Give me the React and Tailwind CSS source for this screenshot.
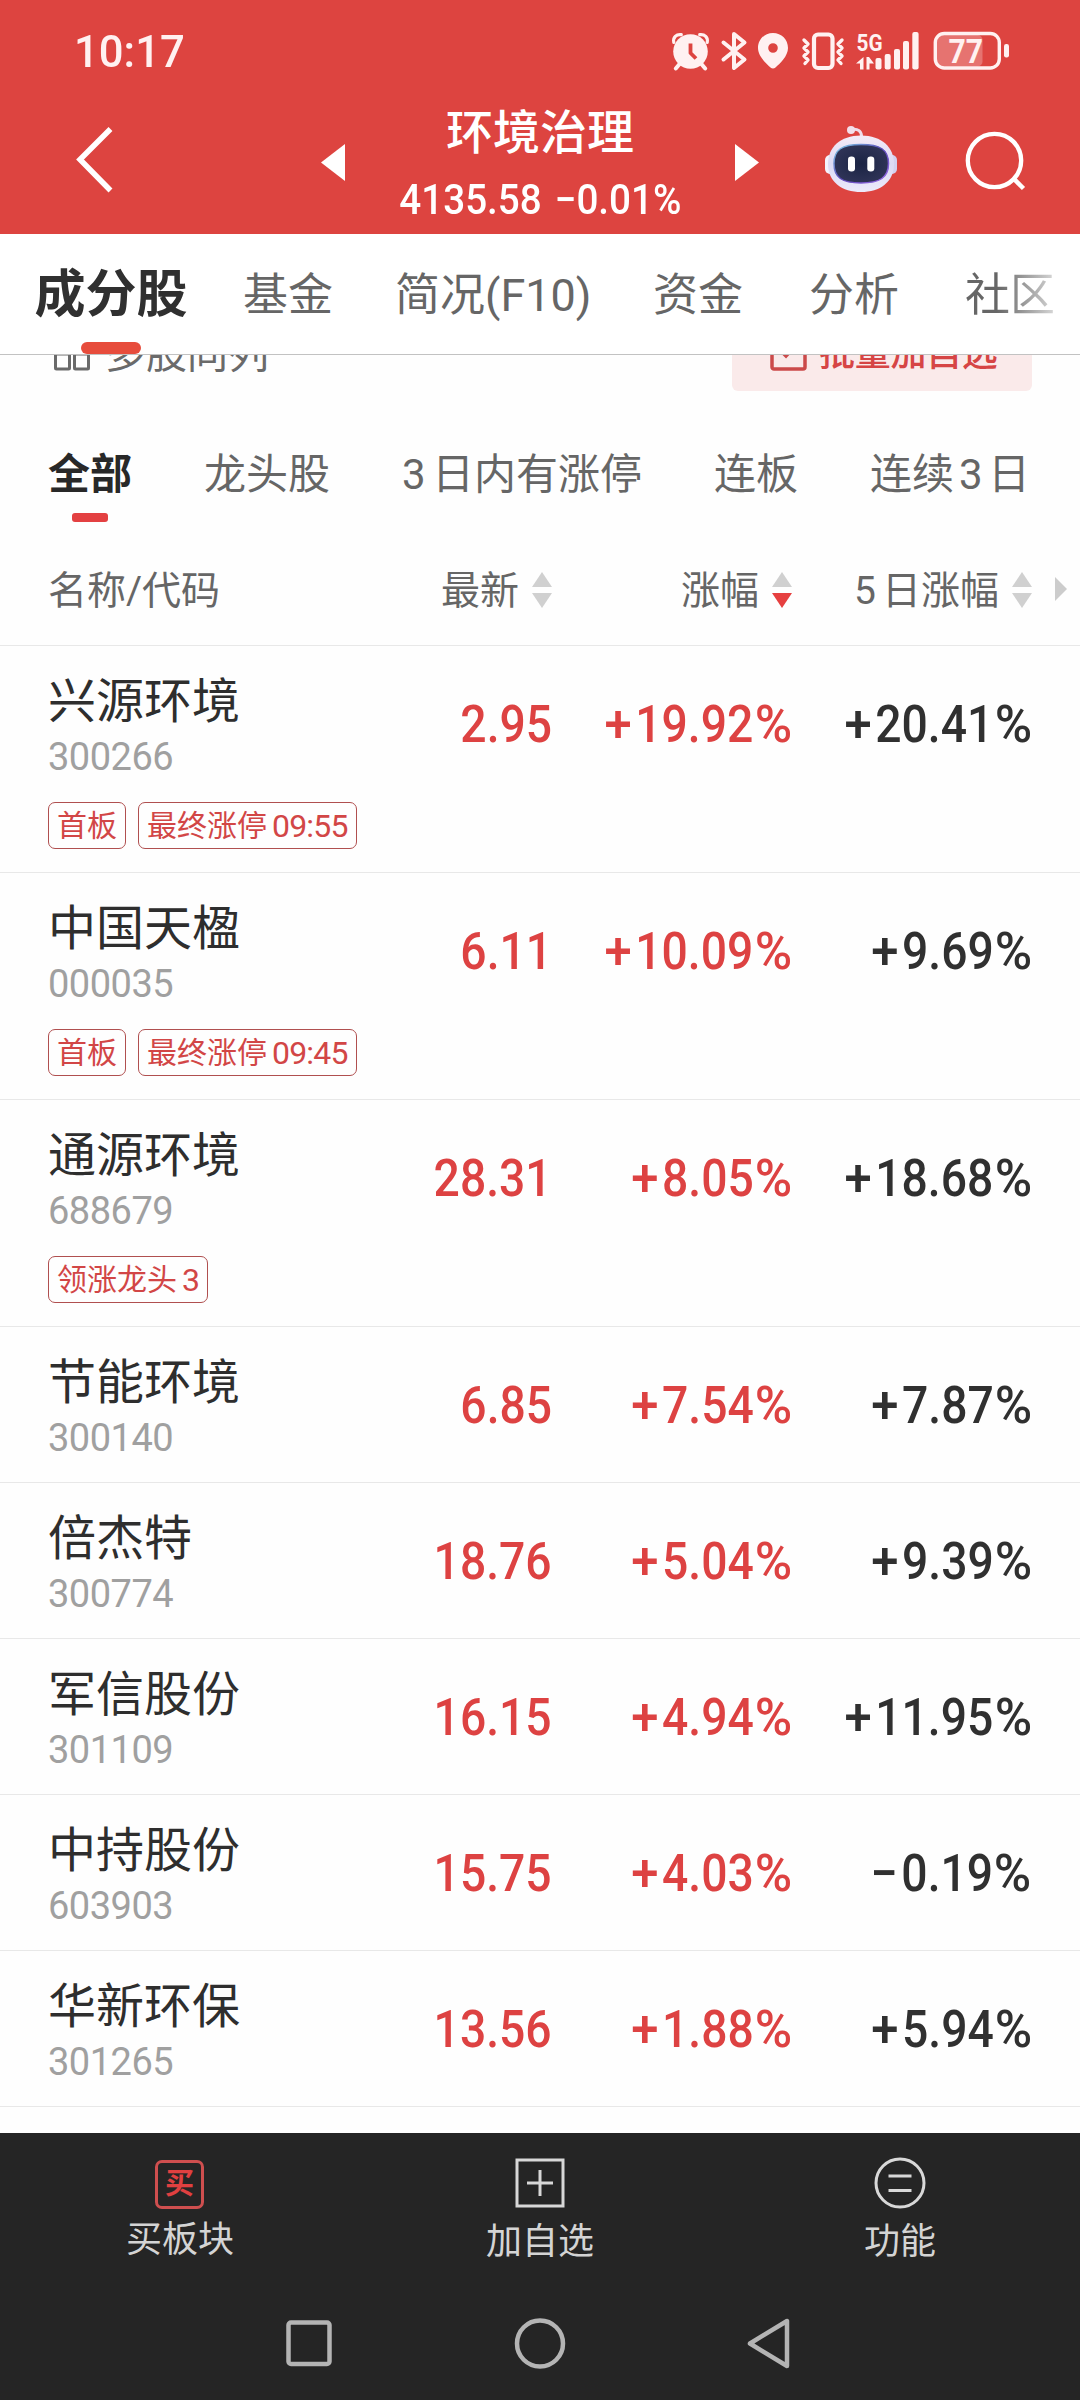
const FONT = "font-['Roboto','Noto_Sans_CJK_SC',sans-serif]";

const ROWS = [
  { name: '兴源环境', code: '300266', last: '2.95', pct: '+19.92%', five: '+20.41%', tags: [['首板', ''], ['最终涨停', '09:55']] },
  { name: '中国天楹', code: '000035', last: '6.11', pct: '+10.09%', five: '+9.69%', tags: [['首板', ''], ['最终涨停', '09:45']] },
  { name: '通源环境', code: '688679', last: '28.31', pct: '+8.05%', five: '+18.68%', tags: [['领涨龙头', '3']] },
  { name: '节能环境', code: '300140', last: '6.85', pct: '+7.54%', five: '+7.87%' },
  { name: '倍杰特', code: '300774', last: '18.76', pct: '+5.04%', five: '+9.39%' },
  { name: '军信股份', code: '301109', last: '16.15', pct: '+4.94%', five: '+11.95%' },
  { name: '中持股份', code: '603903', last: '15.75', pct: '+4.03%', five: '−0.19%' },
  { name: '华新环保', code: '301265', last: '13.56', pct: '+1.88%', five: '+5.94%' },
];

function StatusIcons() {
  return (
    <svg className="block h-[44px] w-[344px]" viewBox="668 29 344 44" fill="none">
      <circle cx="690.5" cy="51.5" r="17.300" fill="#fff1f1" />
      <path d="M673.8 42.500c-1-5 2.500-8.500 7.500-7.800M707.200 42.500c1-5-2.500-8.500-7.500-7.800" stroke="#fff1f1" strokeWidth="3.200" strokeLinecap="round" />
      <path d="M680 63.500l-4.200 5M701 63.500l4.200 5" stroke="#fff1f1" strokeWidth="4" strokeLinecap="round" />
      <path d="M690.500 43.500v9.500l5.500 5.500" stroke="#dd4440" strokeWidth="3.800" strokeLinejoin="round" />
      <path d="M723.500 42.500l21 17-10.500 8.500V34l10.500 8.500-21 17" stroke="#fff1f1" strokeWidth="4" strokeLinejoin="round" strokeLinecap="round" />
      <path fillRule="evenodd" fill="#fff1f1" d="M773 33c8.500 0 15 6.500 15 15 0 8-8 15.500-12.500 19.500-1.600 1.300-3.400 1.300-5 0C766 63.500 758 56 758 48c0-8.500 6.500-15 15-15zm0 10.200a4.800 4.800 0 1 0 0 9.600 4.800 4.800 0 0 0 0-9.600z" />
      <rect x="814" y="34.500" width="18.500" height="33.500" rx="4" stroke="#fff1f1" strokeWidth="4.200" />
      <path d="M804 40l4 4-4 4 4 4-4 4 4 4-3 3.500M842 40l-4 4 4 4-4 4 4 4-4 4 3 3.500" stroke="#fff1f1" strokeWidth="3.400" strokeLinejoin="round" strokeLinecap="round" />
      <text x="856.500" y="50.500" fontSize="24.500" fontWeight="700" textLength="26" lengthAdjust="spacingAndGlyphs" fontFamily="Roboto, sans-serif" fill="#fff1f1">5G</text>
      <path d="M863.500 57v12.500h-3.500v-6h-4zM866.500 57h2.500l5 6.500h-4.500v6h-3z" fill="#fff1f1" />
      <g fill="#fff1f1">
        <rect x="875.500" y="58" width="6" height="11.500" rx="2" />
        <rect x="884.700" y="54" width="6" height="15.500" rx="2" />
        <rect x="894" y="49" width="6" height="20.500" rx="2" />
        <rect x="903" y="41" width="6" height="28.500" rx="2" />
        <rect x="912.300" y="32" width="6.300" height="37.500" rx="2" />
      </g>
      <rect x="937" y="35" width="45.500" height="31.500" rx="5" fill="#e67370" />
      <rect x="935.300" y="33.500" width="64" height="34.500" rx="9" stroke="#fff1f1" strokeWidth="3.400" />
      <rect x="1004" y="44" width="5" height="13.500" rx="2.200" fill="#fff1f1" />
      <text x="948.500" y="62.500" fontSize="34" fontWeight="700" textLength="34.500" lengthAdjust="spacingAndGlyphs" fontFamily="Roboto, sans-serif" fill="#fff1f1">77</text>
    </svg>
  );
}

function Robot() {
  return (
    <svg className="block h-[68px] w-[74px]" viewBox="824 125 74 68" fill="none">
      <defs>
        <linearGradient id="shell" x1="0" y1="0" x2="0" y2="1">
          <stop offset="0" stopColor="#f4ebf7" />
          <stop offset="0.500" stopColor="#dcdaf4" />
          <stop offset="1" stopColor="#eceafb" />
        </linearGradient>
        <linearGradient id="rim" x1="0" y1="0" x2="1" y2="1">
          <stop offset="0" stopColor="#7fd0e8" />
          <stop offset="0.500" stopColor="#5c48b8" />
          <stop offset="1" stopColor="#9a6be8" />
        </linearGradient>
        <radialGradient id="visor">
          <stop offset="0" stopColor="#1b2444" />
          <stop offset="1" stopColor="#2e3356" />
        </radialGradient>
      </defs>
      <path d="M851 129.500c7-1.500 11 2 10.500 8" stroke="#f0dcea" strokeWidth="3" />
      <circle cx="851" cy="130" r="4" fill="#f3dfea" />
      <rect x="825" y="155" width="12" height="19" rx="5" fill="#f4f2fc" />
      <rect x="885" y="155" width="12" height="19" rx="5" fill="#d3d1f0" />
      <path d="M861 135.500c21 0 33 12 33 28.500 0 18-14 28-33 28s-33-10-33-28c0-16.500 12-28.500 33-28.500z" fill="url(#shell)" />
      <path d="M861 144.500c19 0 27.500 5 27.500 19s-8.500 19.500-27.500 19.500-27-5.500-27-19.500 8-19 27-19z" fill="url(#visor)" stroke="url(#rim)" strokeWidth="1.500" />
      <rect x="848" y="156.500" width="7" height="15" rx="3.200" fill="#fff" />
      <rect x="867.300" y="156.500" width="7" height="15" rx="3.200" fill="#fff" />
    </svg>
  );
}

function Header() {
  return (
    <header className="h-[234px] bg-[#dd4440] text-white">
      <div className="flex h-[102px] items-center justify-between pl-[74px] pr-[68px]">
        <span className="origin-left scale-x-[0.97] text-[45px] font-medium leading-none text-[#fff1f1]">10:17</span>
        <StatusIcons />
      </div>
      <div className="flex h-[132px] items-start">
        <svg className="ml-[72px] mt-[21px] h-[74px] w-[44px]" viewBox="72 123 44 74" fill="none">
          <path d="M110.500 129L80 159.500l30.500 31" stroke="#fff" strokeWidth="5.500" />
        </svg>
        <svg className="ml-[205px] mt-[42px] h-[37px] w-[24px]" viewBox="0 0 24 37"><path d="M24 0v37L0 18.500z" fill="#fff" /></svg>
        <div className="flex w-[390px] flex-col items-center">
          <h1 className="-mt-[2px] text-[47px] font-medium leading-[66px]">环境治理</h1>
          <div className="mt-[9px] flex h-[50px] origin-center scale-x-[0.92] items-center gap-[14px] whitespace-nowrap text-[42px] font-medium leading-none">
            <span>4135.58</span><span>−0.01%</span>
          </div>
        </div>
        <svg className="mt-[42px] h-[37px] w-[24px]" viewBox="0 0 24 37"><path d="M0 0v37l24-18.500z" fill="#fff" /></svg>
        <div className="ml-[65px] mt-[23px]"><Robot /></div>
        <svg className="ml-[66px] mt-[28px] h-[64px] w-[64px]" viewBox="964 130 64 64" fill="none">
          <circle cx="994.500" cy="160.500" r="26.700" stroke="#fff" strokeWidth="4.300" />
          <path d="M1013 178l10.500 10.500" stroke="#fff" strokeWidth="4.500" />
        </svg>
      </div>
    </header>
  );
}

function Tabs() {
  return (
    <nav className="flex h-[121px] items-center border-b border-[#c2c2c2] bg-white pl-[35px] text-[45px] whitespace-nowrap text-[#666]">
      <div className="relative flex h-full w-[152px] items-center justify-center pt-[3px] text-[51px] font-bold text-[#303030]">
        成分股
        <i className="absolute bottom-0 left-[46px] h-[12px] w-[60px] rounded-full bg-[#e74c3c]" />
      </div>
      <span className="ml-[56px] w-[90px] pt-[3px]">基金</span>
      <span className="ml-[62px] w-[196px] pt-[3px]">简况(F10)</span>
      <span className="ml-[62px] w-[90px] pt-[3px]">资金</span>
      <span className="ml-[66px] w-[90px] pt-[3px]">分析</span>
      <span className="ml-[66px] w-[90px] bg-linear-to-r from-[#666] from-35% to-[#d8d8d8] bg-clip-text pt-[3px] text-transparent">社区</span>
    </nav>
  );
}

function Tools() {
  return (
    <div className="h-[38px] overflow-hidden">
      <div className="-mt-[39px] flex h-[75px] items-center justify-between pl-[53px] pr-[48px]">
        <div className="flex items-center text-[41px] leading-none text-[#6a6a6a]">
          <svg className="-mt-[4px] mr-[14px] h-[38px] w-[38px]" viewBox="0 0 38 38" fill="none" stroke="#6a6a6a" strokeWidth="3">
            <rect x="11" y="2" width="16" height="15" rx="1" />
            <rect x="2.500" y="21" width="14" height="15" rx="1" />
            <rect x="21.500" y="21" width="14" height="15" rx="1" />
          </svg>
          <span className="pt-[2px]">多股同列</span>
        </div>
        <div className="flex h-[75px] w-[300px] items-center rounded-[6px] bg-[#faeaea] pl-[38px] text-[36px] font-medium leading-none text-[#d64545]">
          <svg className="-mt-[4px] mr-[12px] h-[38px] w-[37px]" viewBox="0 0 37 38" fill="none" stroke="#cb4a4a" strokeWidth="3.500">
            <rect x="2" y="2" width="33" height="34" rx="2" />
            <path d="M11 18l5 5 12-13" />
          </svg>
          <span className="tracking-[-0.3px]">批量加自选</span>
        </div>
      </div>
    </div>
  );
}

function Filters() {
  return (
    <div className="flex h-[160px] items-center pl-[48px] pt-[2px] text-[42px] whitespace-nowrap text-[#666]">
      <div className="relative w-[84px] font-bold text-[#282828]">
        全部
        <i className="absolute left-[24px] top-[70px] h-[9px] w-[36px] rounded-[3px] bg-[#e34041]" />
      </div>
      <span className="ml-[72px] w-[126px]">龙头股</span>
      <span className="ml-[72px] flex w-[240px]"><span className="w-[30px]">3</span>日内有涨停</span>
      <span className="ml-[72px] w-[84px]">连板</span>
      <span className="ml-[72px] flex">连续<span className="w-[34px] pl-[5px]">3</span>日</span>
    </div>
  );
}

function Sort({ active }) {
  return (
    <svg className="-mt-[2px] ml-[13px] h-[36px] w-[20px]" viewBox="0 0 20 36">
      <path d="M10 0l10 15H0z" fill="#d0d0d0" />
      <path d="M10 36L0 21h20z" fill={active ? '#e64040' : '#d0d0d0'} />
    </svg>
  );
}

function TableHead() {
  return (
    <div className="flex h-[93px] items-start border-b border-[#e8e8e8] pl-[48px] pt-px text-[39px] leading-[74px] whitespace-nowrap text-[#666]">
      <span className="w-[180px]">名称/代码</span>
      <div className="flex w-[324px] items-center justify-end">最新<Sort /></div>
      <div className="flex w-[240px] items-center justify-end">涨幅<Sort active /></div>
      <div className="flex w-[240px] items-center justify-end"><span className="mr-[6px] text-[39px]">5</span>日涨幅<Sort /></div>
      <svg className="ml-[23px] mt-[23px] h-[24px] w-[12px]" viewBox="0 0 12 24"><path d="M0 0l12 12L0 24z" fill="#ccc" /></svg>
    </div>
  );
}

/* Right-aligned figure in condensed digits, with room round its sign and percent mark. */
function Num({ children, className }) {
  const [, sign, digits, unit] = children.match(/^([+−]?)([\d.]+)(%?)$/);
  return (
    <div className={`mt-[45px] flex h-[68px] items-center justify-end whitespace-nowrap text-[52px] font-medium leading-none ${className}`}>
      <span className="flex origin-right scale-x-[0.89]">
        {sign && <span className="mr-[4px] inline-block origin-right scale-x-[1.06]">{sign}</span>}
        <span>{digits}</span>
        {unit && <span className="ml-[5px] inline-block origin-right scale-x-[1.1]">{unit}</span>}
      </span>
    </div>
  );
}

function Row({ row }) {
  return (
    <div className={`flex items-start border-b border-[#e8e8e8] pl-[48px] ${row.tags ? 'h-[227px]' : 'h-[156px]'}`}>
      <div className="w-[324px]">
        <div className="mt-[24px] h-[64px] text-[48px] leading-[64px] text-[#2e2e2e]">{row.name}</div>
        <div className="mt-px h-[44px] text-[38px] leading-[44px] tracking-[-0.5px] text-[#a0a0a0]">{row.code}</div>
        {row.tags && (
          <div className="mt-[23px] flex gap-[12px]">
            {row.tags.map(([label, num]) => (
              <span key={label} className="flex h-[47px] items-center rounded-[7px] border border-[#b04f4f] px-[8px] text-[30px] leading-none whitespace-nowrap text-[#d24646]">
                <span className="pt-px">{label}</span>
                {num && <span className="ml-[5px] text-[32px] tracking-[-0.8px]">{num}</span>}
              </span>
            ))}
          </div>
        )}
      </div>
      <Num className="w-[180px] text-[#dd4242]">{row.last}</Num>
      <Num className="w-[240px] text-[#dd4242]">{row.pct}</Num>
      <Num className="w-[240px] text-[#303030]">{row.five}</Num>
    </div>
  );
}

function BottomBar() {
  const label = 'h-[44px] text-[36px] leading-[44px] text-[#d4d4d4]';
  return (
    <footer className="h-[267px] bg-[#252525]">
      <div className="grid h-[150px] grid-cols-3">
        <div className="flex flex-col items-center pt-[27px]">
          <div className="mr-[1px] flex h-[49px] w-[49px] items-center justify-center rounded-[7px] border-[3px] border-[#cf4f4f] text-[29px] font-bold leading-none text-[#e04040]">买</div>
          <div className={`mt-[9px] ${label}`}>买板块</div>
        </div>
        <div className="flex flex-col items-center pt-[25px]">
          <svg className="mr-[1px] h-[50px] w-[50px]" viewBox="0 0 50 50" fill="none" stroke="#d8d8d8" strokeWidth="3">
            <rect x="2" y="2" width="46" height="46" />
            <path d="M12 25h26M25 12v26" />
          </svg>
          <div className={`mt-[12px] ${label}`}>加自选</div>
        </div>
        <div className="flex flex-col items-center pt-[24px]">
          <svg className="h-[52px] w-[52px]" viewBox="0 0 52 52" fill="none" stroke="#d8d8d8" strokeWidth="3">
            <circle cx="26" cy="26" r="24" />
            <path d="M14.500 19h23M14.500 33.500h23" />
          </svg>
          <div className={`mt-[11px] ${label}`}>功能</div>
        </div>
      </div>
      <div className="flex items-center justify-between pl-[284px] pr-[288px] pt-[33px]">
        <svg className="h-[54px] w-[50px]" viewBox="0 0 50 54" fill="none"><rect x="4.500" y="6.500" width="41" height="41.500" rx="2.500" stroke="#b4b4b4" strokeWidth="4.500" /></svg>
        <svg className="h-[54px] w-[54px]" viewBox="0 0 54 54" fill="none"><circle cx="27" cy="27.500" r="23" stroke="#b4b4b4" strokeWidth="4.500" /></svg>
        <svg className="h-[54px] w-[46px]" viewBox="0 0 46 54" fill="none"><path d="M41 5v45L4 27.500z" stroke="#b4b4b4" strokeWidth="4.500" strokeLinejoin="round" /></svg>
      </div>
    </footer>
  );
}

export default function App() {
  return (
    <div className={`flex h-[2400px] w-[1080px] flex-col overflow-hidden bg-[#fefefe] ${FONT}`} lang="zh-CN">
      <Header />
      <Tabs />
      <Tools />
      <Filters />
      <TableHead />
      <main className="h-[1487px]">
        {ROWS.map((row) => <Row key={row.code} row={row} />)}
      </main>
      <BottomBar />
    </div>
  );
}
